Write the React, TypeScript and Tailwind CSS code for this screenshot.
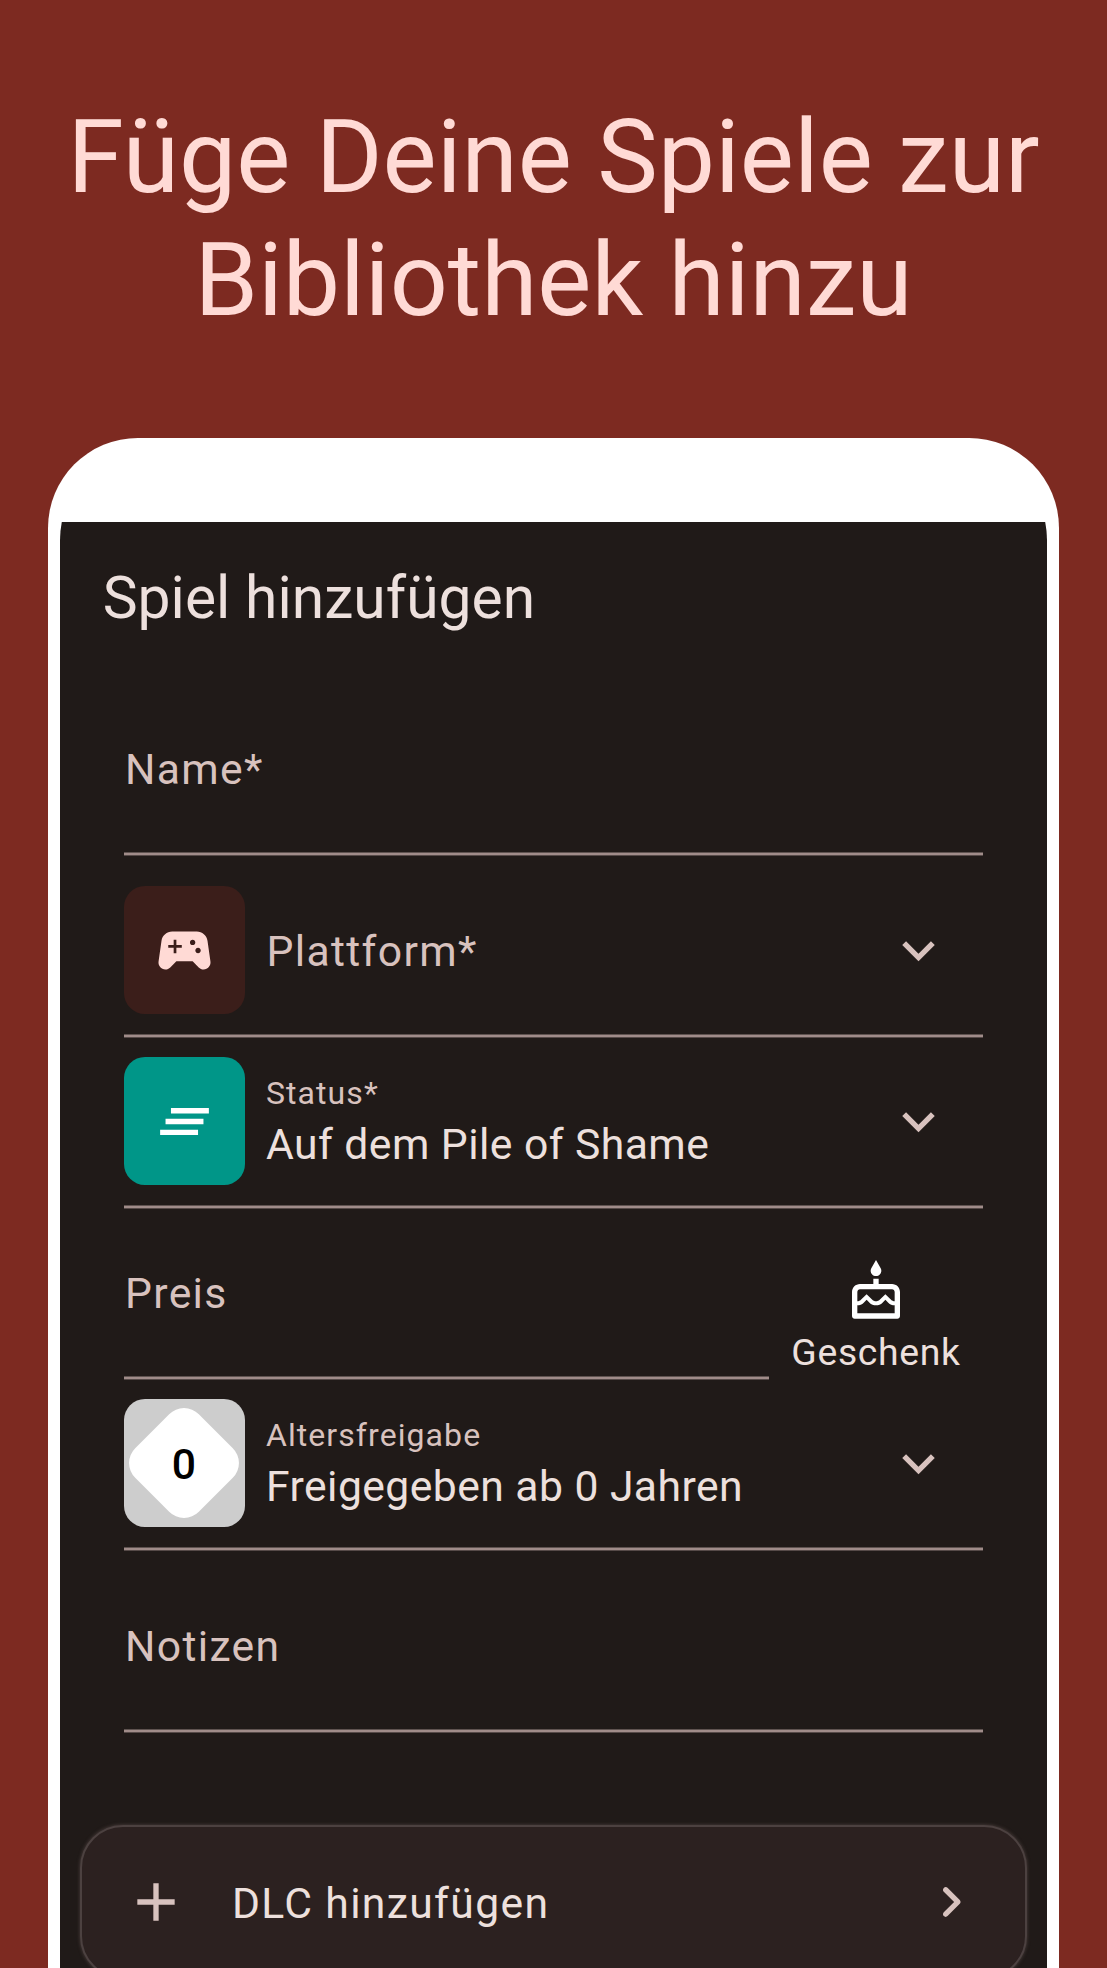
import type { ReactNode } from "react";

function Divider() {
  return (
    <div className="w-full shrink-0">
      <div className="h-px bg-[#5f5350]" />
      <div className="h-[2px] bg-[#a08c89]" />
      <div className="h-px bg-[#564a48]" />
    </div>
  );
}

function ChevronDown() {
  return (
    <svg viewBox="0 0 24 24" className="mr-[32px] size-[65px] fill-[#d8c2be]">
      <path d="M7.41 8.59 12 13.17l4.59-4.58L18 10l-6 6-6-6 1.41-1.41z" />
    </svg>
  );
}

function Tile({ color, children }: { color: string; children: ReactNode }) {
  return (
    <div className={`flex h-[128px] w-[120.5px] shrink-0 items-center justify-center rounded-[21px] ${color}`}>
      {children}
    </div>
  );
}

const label = "text-[42.67px] leading-[64px] tracking-[1.34px] text-[#d8c2be]";

function Select({ label: caption, value, tile }: { label: string; value?: string; tile: ReactNode }) {
  return (
    <div className="flex h-[128px] items-center">
      {tile}
      <div className="ml-[21.5px] h-full flex-1 whitespace-nowrap">
        {value ? (
          <>
            <div className="pt-[15px] text-[32px] leading-[43px] tracking-[1.07px] text-[#d8c2be]">{caption}</div>
            <div className="pt-px text-[42.67px] leading-[56px] tracking-[0.45px] text-[#ede0dd]">{value}</div>
          </>
        ) : (
          <div className={`pl-[0.5px] pt-[33px] ${label}`}>{caption}</div>
        )}
      </div>
      <ChevronDown />
    </div>
  );
}

export default function App() {
  return (
    <main className="flex h-[1968px] w-[1107px] flex-col overflow-hidden bg-[#7d2a21] font-['Roboto',sans-serif]">
      <h1 className="h-[438px] shrink-0 pt-[96px] text-center text-[102px] leading-[123px] text-[#ffdad5]">
        Füge Deine Spiele zur
        <br />
        Bibliothek hinzu
      </h1>
      <div className="mx-[48px] h-[1700px] shrink-0 overflow-hidden rounded-t-[90px] bg-white px-[12px] pt-[12px]">
        <div className="h-full overflow-hidden rounded-t-[90px]">
          <div className="h-[72px] bg-white" />
          <div className="h-[1600px] bg-[#201a18]">
            <h2 className="h-[202px] pl-[42.7px] pt-[40px] text-[58.7px] leading-[72px] tracking-[0.05px] text-[#ede0dd]">
              Spiel hinzufügen
            </h2>
            <div className="px-[64px]">
              <div className={`h-[128px] pl-px pt-[13px] ${label}`}>Name*</div>
              <Divider />
              <div className="h-[30px]" />
              <Select
                label="Plattform*"
                tile={
                  <Tile color="bg-[#3b1e1a]">
                    <svg viewBox="0 0 24 24" className="size-[65px] fill-[#ffdad5]">
                      <path d="m21.58 16.09-1.09-7.66C20.21 6.46 18.52 5 16.53 5H7.47C5.48 5 3.79 6.46 3.51 8.43l-1.09 7.66C2.2 17.63 3.39 19 4.94 19c.68 0 1.32-.27 1.8-.75L9 16h6l2.25 2.25c.48.48 1.13.75 1.8.75 1.56 0 2.75-1.37 2.53-2.91zM11 11H9v2H8v-2H6v-1h2V8h1v2h2v1zm4-1c-.55 0-1-.45-1-1s.45-1 1-1 1 .45 1 1-.45 1-1 1zm2 3c-.55 0-1-.45-1-1s.45-1 1-1 1 .45 1 1-.45 1-1 1z" />
                    </svg>
                  </Tile>
                }
              />
              <div className="h-[20px]" />
              <Divider />
              <div className="h-[19px]" />
              <Select
                label="Status*"
                value="Auf dem Pile of Shame"
                tile={
                  <Tile color="bg-[#009688]">
                    <svg viewBox="0 0 24 24" className="size-[65px] fill-white">
                      <path d="M5 13h14v-2H5v2zm-2 4h14v-2H3v2zM7 7v2h14V7H7z" />
                    </svg>
                  </Tile>
                }
              />
              <div className="h-[20px]" />
              <Divider />
              <div className="flex h-[171px]">
                <div className="w-[645px]">
                  <div className={`h-[167px] pl-px pt-[52px] ${label}`}>Preis</div>
                  <Divider />
                </div>
                <div className="flex flex-1 flex-col items-center pt-[51px]">
                  <svg viewBox="0 0 24 24" className="size-[64px] fill-white">
                    <path d="M12 6c1.11 0 2-.9 2-2 0-.38-.1-.73-.29-1.03L12 0l-1.71 2.97c-.19.3-.29.65-.29 1.03 0 1.1.9 2 2 2zm6 3h-5V7h-2v2H6c-1.66 0-3 1.34-3 3v9c0 .55.45 1 1 1h16c.55 0 1-.45 1-1v-9c0-1.66-1.34-3-3-3zm1 11H5v-3c.9-.01 1.76-.37 2.4-1.01l1.09-1.07 1.07 1.07c1.31 1.31 3.59 1.3 4.89 0l1.08-1.07 1.07 1.07c.64.64 1.5 1 2.4 1.01v3zm0-4.5c-.51-.01-.99-.2-1.35-.57l-2.13-2.13-2.14 2.13c-.74.74-2.03.74-2.77 0L8.48 12.8l-2.14 2.14c-.35.36-.83.56-1.34.56V12c0-.55.45-1 1-1h12c.55 0 1 .45 1 1v3.5z" />
                  </svg>
                  <div className="text-[37.33px] leading-[56px] tracking-[0.67px] text-[#ede0dd]">Geschenk</div>
                </div>
              </div>
              <div className="h-[19px]" />
              <Select
                label="Altersfreigabe"
                value="Freigegeben ab 0 Jahren"
                tile={
                  <Tile color="bg-[#cdcdcd]">
                    <div className="flex size-[90px] rotate-45 items-center justify-center rounded-[21px] bg-white">
                      <span className="-rotate-45 pt-[2px] text-[42.67px] font-medium leading-none text-black">0</span>
                    </div>
                  </Tile>
                }
              />
              <div className="h-[20px]" />
              <Divider />
              <div className={`h-[178px] pl-px pt-[63px] ${label}`}>Notizen</div>
              <Divider />
            </div>
            <div className="mx-[20px] mt-[92px] flex h-[154px] items-center rounded-[43px] border-[2px] border-[#4c4140] bg-[#2c2120] px-[42px] shadow-[0_0_3px_1px_#3c3230]">
              <svg viewBox="0 0 24 24" className="size-[64px] fill-[#d8c2be]">
                <path d="M19 13h-6v6h-2v-6H5v-2h6V5h2v6h6v2z" />
              </svg>
              <div className="ml-[44px] flex-1 pt-[2px] text-[42.67px] leading-[64px] tracking-[1.34px] text-[#ede0dd]">
                DLC hinzufügen
              </div>
              <svg viewBox="0 0 24 24" className="size-[64px] fill-[#d8c2be]">
                <path d="M9.29 6.71c-.39.39-.39 1.02 0 1.41L13.17 12l-3.88 3.88c-.39.39-.39 1.02 0 1.41.39.39 1.02.39 1.41 0l4.59-4.59c.39-.39.39-1.02 0-1.41L10.7 6.7c-.38-.38-1.02-.38-1.41.01z" />
              </svg>
            </div>
          </div>
        </div>
      </div>
    </main>
  );
}
